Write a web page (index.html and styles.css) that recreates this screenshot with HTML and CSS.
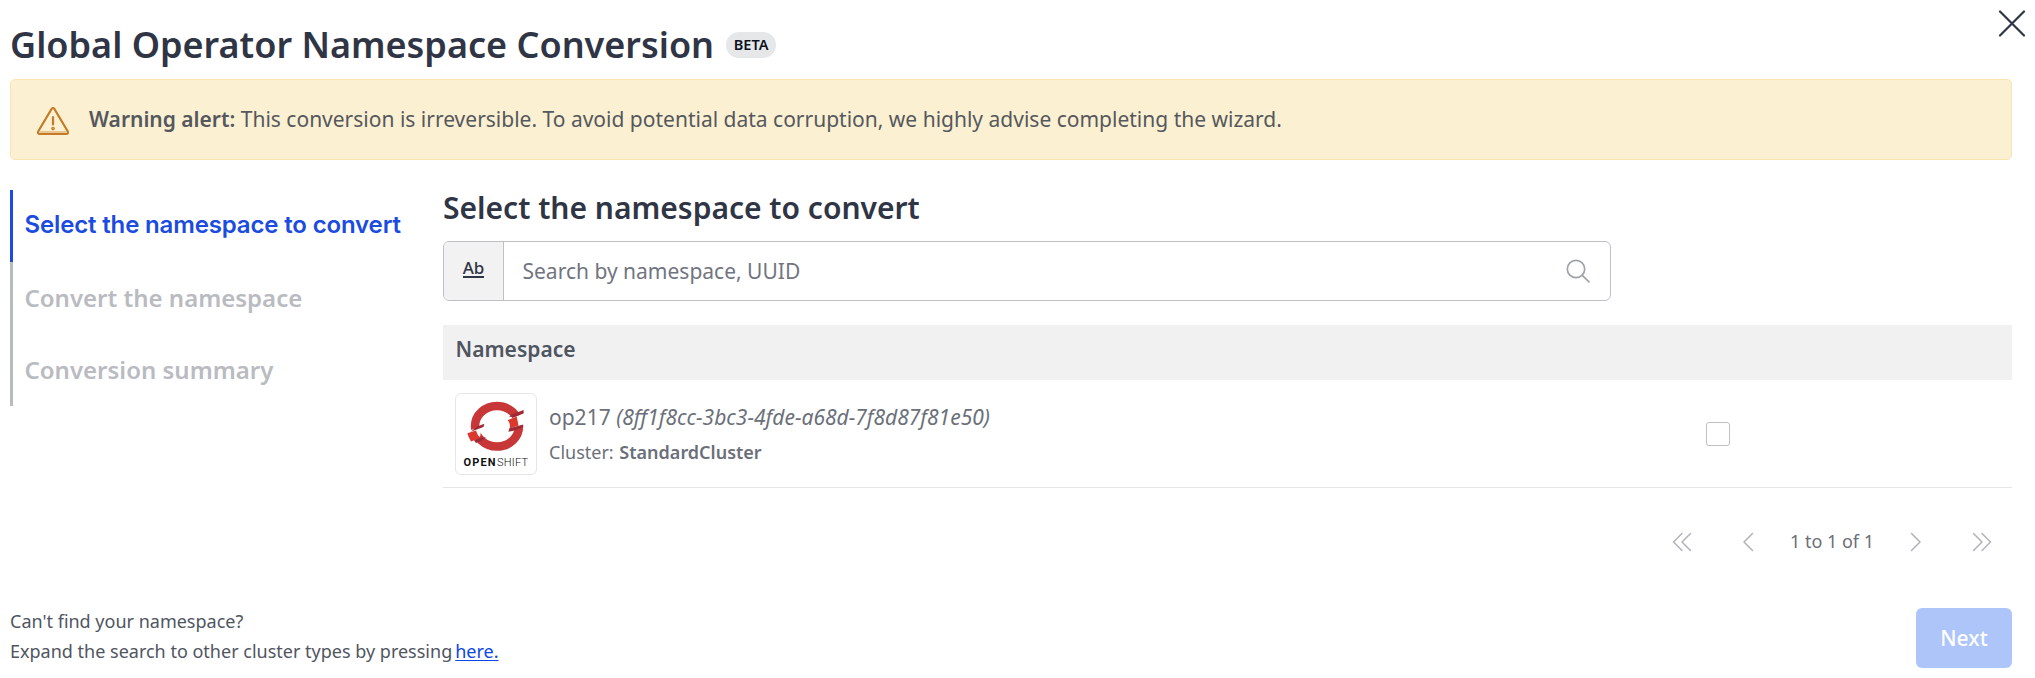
FILE: index.html
```html
<!DOCTYPE html>
<html lang="en">
<head>
<meta charset="utf-8">
<title>Global Operator Namespace Conversion</title>
<link rel="stylesheet" href="styles.css">
</head>
<body>
<div class="page">
  <header class="header">
    <h1 class="title">Global Operator Namespace Conversion</h1>
    <span class="badge">BETA</span>
    <button class="close" aria-label="Close">
      <svg width="28" height="28" viewBox="0 0 28 28" fill="none" stroke="#2f3545" stroke-width="2.2" stroke-linecap="round"><path d="M2 2.500L26 26.500M26 2.500L2 26.500"/></svg>
    </button>
  </header>
  <div class="alert" role="alert">
    <svg class="alert-icon" width="34" height="30" viewBox="0 0 34 30" fill="none" stroke="#c47a26" stroke-width="2.2" stroke-linecap="round" stroke-linejoin="round"><path d="M4.5 26H29.500" stroke="#e2b77c" stroke-width="1.500"/><path d="M15.700 2.800L2.300 25.300C1.600 26.800 2.200 28 3.800 28H30.200C31.800 28 32.400 26.800 31.700 25.300L18.300 2.800C17.600 1.700 16.400 1.700 15.700 2.800Z"/><path d="M17 11V18.500"/><circle cx="17" cy="22.600" r="0.700"/></svg>
    <p class="alert-text"><strong>Warning alert:</strong> This conversion is irreversible. To avoid potential data corruption, we highly advise completing the wizard.</p>
  </div>
  <div class="body">
    <ol class="steps">
      <li class="step step-active"><span>Select the namespace to convert</span></li>
      <li class="step"><span>Convert the namespace</span></li>
      <li class="step"><span>Conversion summary</span></li>
    </ol>
    <main class="main">
      <h2 class="subtitle">Select the namespace to convert</h2>
      <div class="search">
        <div class="search-mode"><span>Ab</span></div>
        <input class="search-input" type="text" placeholder="Search by namespace, UUID">
        <svg class="search-icon" width="26" height="26" viewBox="0 0 26 26" fill="none" stroke="#9ea2a9" stroke-width="1.700" stroke-linecap="round"><circle cx="11" cy="11" r="8.700"/><path d="M17.300 17.300L24 23.800"/></svg>
      </div>
      <div class="table">
        <div class="table-head">Namespace</div>
        <div class="row">
          <div class="logo">
            <svg width="80" height="80" viewBox="0 0 80 80">
              <ellipse cx="41" cy="32.300" rx="22" ry="20.300" fill="none" stroke="#c83737" stroke-width="8.500"/>
              <path d="M10 37.500L26 32.500L24 43L19 46L12 49Z" fill="#fff"/>
              <path d="M54 25L72 17.500L71 30L57 34Z" fill="#fff"/>
              <path d="M14.700 37.800L21 32.400L28.300 29.800L27.500 33Z" fill="#9f2a36"/>
              <path d="M11.300 39.300L20 36.500Q21 41 24.500 43.700L15 47.500Q12.500 43.500 11.300 39.300Z" fill="#dc382d"/>
              <path d="M18 46.300L24.500 43.700L30 43.200L26 46.500L20 49Z" fill="#9f2a36"/>
              <path d="M51.800 26.200L60.700 22.500L62.500 31.500L53.500 34.500Q55 30 51.800 26.200Z" fill="#dc382d"/>
              <path d="M57 20L67.600 15.900L67.600 19.500L57.500 23.300L53 22.500Z" fill="#9f2a36"/>
              <path d="M53.500 34.300L67.200 30.400L66.500 33.500L57.500 36.700L52.300 37.800Z" fill="#9f2a36"/>
              <text class="logo-bold" x="7.500" y="71.500" textLength="32" lengthAdjust="spacing">OPEN</text>
              <text class="logo-thin" x="41" y="71.500" textLength="31" lengthAdjust="spacing">SHIFT</text>
            </svg>
          </div>
          <div class="info">
            <div class="name">op217 <em>(8ff1f8cc-3bc3-4fde-a68d-7f8d87f81e50)</em></div>
            <div class="cluster">Cluster: <strong>StandardCluster</strong></div>
          </div>
          <span class="checkbox" role="checkbox" aria-checked="false"></span>
        </div>
      </div>
      <nav class="pager">
        <svg width="20" height="20" viewBox="0 0 20 20"><path d="M10 1.500L1.500 10L10 18.500M18.500 1.500L10 10L18.500 18.500"/></svg>
        <svg class="prev" width="12" height="20" viewBox="0 0 12 20"><path d="M10.500 1.500L2 10L10.500 18.500"/></svg>
        <span class="range">1 to 1 of 1</span>
        <svg class="next-page" width="12" height="20" viewBox="0 0 12 20"><path d="M1.500 1.500L10 10L1.500 18.500"/></svg>
        <svg width="20" height="20" viewBox="0 0 20 20"><path d="M1.500 1.500L10 10L1.500 18.500M10 1.500L18.500 10L10 18.500"/></svg>
      </nav>
    </main>
  </div>
  <footer class="footer">
    <div class="help"><p>Can't find your namespace?</p><p>Expand the search to other cluster types by pressing<a class="link" href="#">here.</a></p></div>
    <button class="next">Next</button>
  </footer>
</div>
</body>
</html>
```
FILE: styles.css
```css
* { box-sizing: border-box; margin: 0; padding: 0; }
body { font-family: "Noto Sans", sans-serif; background: #fff; color: #4f5561; }
.page { width: 2035px; height: 678px; padding: 0 23px 0 10px; overflow: hidden; display: flex; flex-direction: column; }
.header { height: 79px; display: flex; align-items: flex-start; }
.title { font-size: 36px; line-height: 50px; font-weight: 600; color: #2f3545; margin-top: 20px; white-space: nowrap; }
.badge { margin: 32px 0 0 12px; width: 50px; height: 26px; border-radius: 13px; background: #e6e7e9; color: #0c1022; font-size: 14.500px; font-weight: 600; line-height: 25px; text-align: center; }
.close { margin: 9px -14px 0 auto; width: 28px; height: 28px; border: 0; background: none; }
.close svg { display: block; }
.alert { height: 81px; border: 1px solid #fae4b0; border-radius: 5px; background: #fcf0d3; display: flex; align-items: center; padding-left: 25px; }
.alert-icon { margin-top: 3px; flex: none; }
.alert-text { margin: -2px 0 0 19px; font-size: 21px; line-height: 30px; color: #55585c; white-space: nowrap; }
.alert-text strong { font-weight: 600; }
.body { height: 428px; padding-top: 30px; display: flex; align-items: flex-start; }
.steps { list-style: none; width: 433px; flex: none; }
.step { height: 72px; border-left: 3px solid #b9bbc1; padding-left: 11.500px; font-size: 24px; font-weight: 600; line-height: 72px; color: #b9bbc1; white-space: nowrap; }
.step-active { border-color: #1b4bdf; color: #1b4bdf; font-family: Inter, sans-serif; line-height: 70px; letter-spacing: -0.150px; }
.main { flex: 1; }
.subtitle { height: 51px; font-size: 30px; line-height: 36px; font-weight: 600; color: #2f3545; white-space: nowrap; }
.search { width: 1168px; height: 60px; border: 1px solid #bfc0c6; border-radius: 6px; display: flex; align-items: center; overflow: hidden; }
.search-mode { width: 60px; height: 58px; flex: none; background: #f2f2f2; border-right: 1px solid #bfc0c6; display: flex; justify-content: center; padding-top: 15px; }
.search-mode span { height: 21px; line-height: 21px; font-size: 17px; font-weight: 500; color: #2f3545; border-bottom: 2px solid #2f3545; }
.search-input { flex: 1; height: 58px; border: 0; outline: 0; padding-left: 18.500px; font: 21px "Noto Sans", sans-serif; background: #fff; }
.search-input::placeholder { color: #71757f; opacity: 1; }
.search-icon { margin-right: 19px; }
.table { margin-top: 24px; }
.table-head { height: 55px; background: #f1f1f1; padding-left: 12.500px; font-size: 21px; line-height: 48px; font-weight: 600; color: #4f5561; }
.row { height: 108px; border-bottom: 1px solid #e5e5e6; display: flex; align-items: center; padding: 0 282px 0 12px; }
.logo { width: 82px; height: 82px; border: 1px solid #e5e5e6; border-radius: 6px; }
.logo svg { display: block; }
.logo text { font-family: Roboto, sans-serif; font-size: 11px; fill: #111; }
.logo .logo-bold { font-weight: 700; }
.logo .logo-thin { font-weight: 300; }
.info { margin-left: 12px; color: #6b6f7a; white-space: nowrap; }
.name { font-size: 21px; line-height: 36px; }
.cluster { font-size: 18px; line-height: 34px; }
.cluster strong { font-weight: 600; margin-left: 1px; }
.checkbox { margin-left: auto; width: 24px; height: 24px; border: 1px solid #bfc0c6; border-radius: 3px; }
.pager { margin-top: 42px; height: 24px; padding-right: 20px; display: flex; align-items: center; justify-content: flex-end; }
.pager svg { fill: none; stroke: #b1b3b9; stroke-width: 1.500; stroke-linecap: round; stroke-linejoin: round; }
.prev { margin-left: 50px; }
.range { width: 156px; text-align: center; font-size: 18px; line-height: 22px; margin-top: -2px; color: #6b6f7a; }
.next-page { margin-right: 50px; }
.footer { padding-top: 20px; display: flex; justify-content: space-between; align-items: flex-start; }
.help { margin-top: -2px; font-size: 18px; line-height: 30px; color: #4f5561; }
.link { margin-left: 3px; color: #0b46ea; text-underline-offset: 2px; text-decoration-thickness: 1px; }
.next { width: 96px; height: 60px; border: 0; border-radius: 6px; background: #adc5f8; color: #fff; font: 500 21px "Noto Sans", sans-serif; padding-bottom: 1px; }
```
